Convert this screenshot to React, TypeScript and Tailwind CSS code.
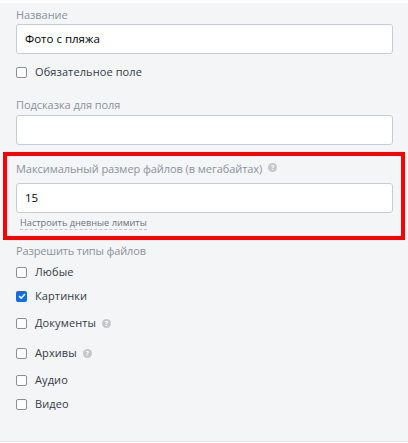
const sans = "font-['Open_Sans','Noto_Sans',sans-serif]";

function Help({ className = "" }: { className?: string }) {
  return (
    <span className={`flex h-[9px] w-[9px] items-center justify-center rounded-full bg-[#c4c6c9] text-[7px] font-bold leading-none text-white ${className}`}>?</span>
  );
}

function Box({ checked = false }: { checked?: boolean }) {
  return checked ? (
    <span className="flex h-[11px] w-[11px] items-center justify-center rounded-[2px] bg-[#0b6fe8]">
      <svg viewBox="0 0 12 12" className="h-[10px] w-[10px]"><path d="M2.5 6.2 5 8.6 9.6 3.6" fill="none" stroke="white" strokeWidth="1.9" /></svg>
    </span>
  ) : (
    <span className="h-[11px] w-[11px] rounded-[2px] border border-[#8f8f8f] bg-white" />
  );
}

function Check({ label, checked, help, className = "" }: { label: string; checked?: boolean; help?: boolean; className?: string }) {
  return (
    <div className={`flex items-center text-[11px] leading-[16px] tracking-[0.1px] text-[#333b45] ${className}`}>
      <Box checked={checked} />
      <span className="ml-[8px]">{label}</span>
      {help && <Help className="ml-[6px]" />}
    </div>
  );
}

function Field({ value = "" }: { value?: string }) {
  return (
    <div className="flex h-[30px] w-[377px] items-center rounded-[3px] border border-[#c5ccd6] bg-white pl-[8px] text-[11.5px] text-black">{value}</div>
  );
}

export default function App() {
  return (
    <div className={`h-[443px] w-[408px] overflow-hidden bg-white ${sans}`}>
      <div className="h-[3px]" />
      <div className="h-[439px] border-b border-[#e5e7ea] bg-[#f4f5f7] pl-[16px] pt-[4px]">
        <div className="text-[11px] leading-[16px] tracking-[-0.06px] text-[#8b929c]">Название</div>
        <div className="mt-[1px]"><Field value="Фото с пляжа" /></div>
        <Check label="Обязательное поле" className="mt-[10px]" />
        <div className="mt-[17px] text-[11px] leading-[16px] tracking-[-0.06px] text-[#8b929c]">Подсказка для поля</div>
        <div className="mt-[2px]"><Field /></div>
        <div className="mt-[7px] -ml-[13px] h-[88px] w-[402px] border-[4px] border-[#ff0000] pl-[9px] pt-[5px]">
          <div className="flex items-center text-[11px] leading-[16px] tracking-[-0.06px] text-[#8b929c]">Максимальный размер файлов (в мегабайтах)<Help className="ml-[6px] -mt-[3px]" /></div>
          <div className="mt-[6px]"><Field value="15" /></div>
          <div className="ml-[4px] mt-[3px] w-fit border-b border-dashed border-[#c0c4ca] text-[9.2px] leading-[13px] text-[#6a7380]">Настроить дневные лимиты</div>
        </div>
        <div className="mt-[3px] text-[11px] leading-[16px] tracking-[-0.14px] text-[#8b929c]">Разрешить типы файлов</div>
        <Check label="Любые" className="mt-[5px]" />
        <Check label="Картинки" checked className="mt-[8px]" />
        <Check label="Документы" help className="mt-[11px]" />
        <Check label="Архивы" help className="mt-[14px]" />
        <Check label="Аудио" className="mt-[11px]" />
        <Check label="Видео" className="mt-[8px]" />
      </div>
    </div>
  );
}
